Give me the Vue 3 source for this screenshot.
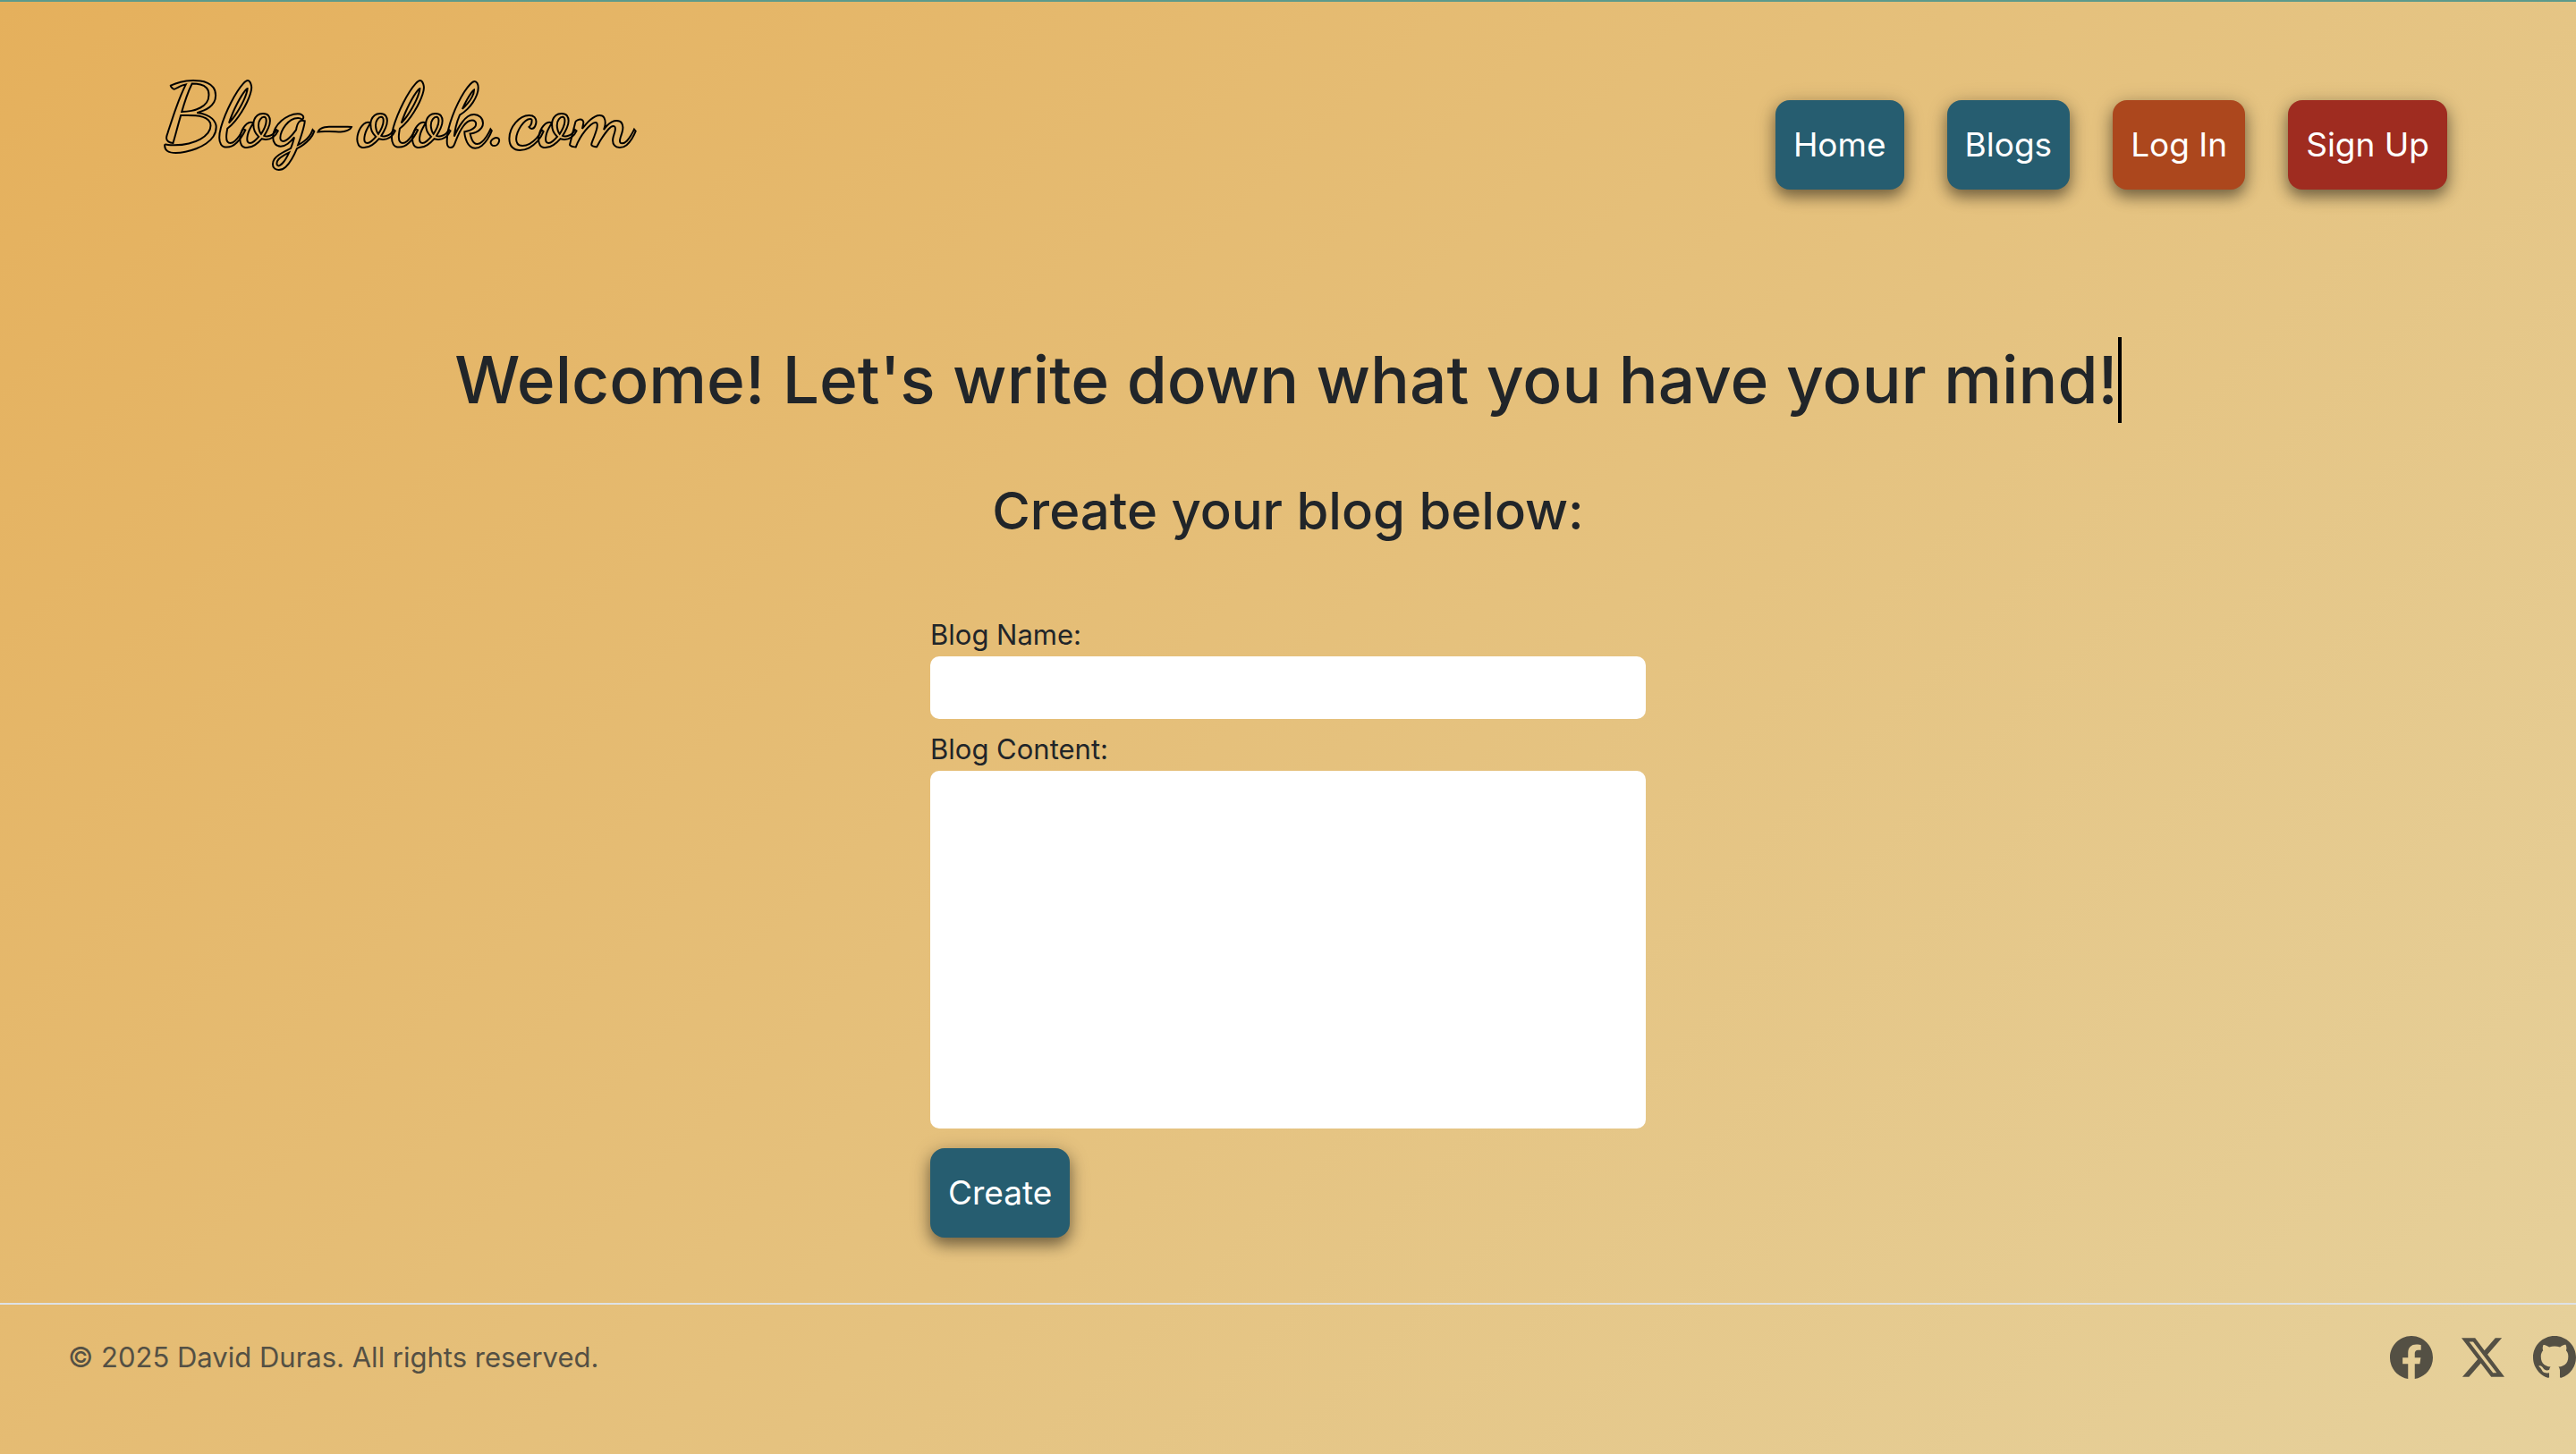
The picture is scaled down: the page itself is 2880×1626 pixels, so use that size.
<script setup>
import { ref } from 'vue'

const links = [
  { label: 'Home', tone: 'teal' },
  { label: 'Blogs', tone: 'teal' },
  { label: 'Log In', tone: 'rust' },
  { label: 'Sign Up', tone: 'red' },
]

const socials = [
  {
    name: 'Facebook',
    path: 'M16 8.049c0-4.446-3.582-8.05-8-8.05C3.58 0-.002 3.603-.002 8.05c0 4.017 2.926 7.347 6.75 7.951v-5.625h-2.03V8.05H6.75V6.275c0-2.017 1.195-3.131 3.022-3.131.876 0 1.791.157 1.791.157v1.98h-1.009c-.993 0-1.303.621-1.303 1.258v1.51h2.218l-.354 2.326H9.25V16c3.824-.604 6.75-3.934 6.75-7.951',
  },
  {
    name: 'X',
    path: 'M12.6.75h2.454l-5.36 6.142L16 15.25h-4.937l-3.867-5.07-4.425 5.07H.316l5.733-6.57L0 .75h5.063l3.495 4.633L12.601.75Zm-.86 13.028h1.36L4.323 2.145H2.865z',
  },
  {
    name: 'GitHub',
    path: 'M8 0C3.58 0 0 3.58 0 8c0 3.54 2.29 6.53 5.47 7.59.4.07.55-.17.55-.38 0-.19-.01-.82-.01-1.49-2.01.37-2.53-.49-2.69-.94-.09-.23-.48-.94-.82-1.13-.28-.15-.68-.52-.01-.53.63-.01 1.08.58 1.23.82.72 1.21 1.87.87 2.33.66.07-.52.28-.87.51-1.07-1.78-.2-3.64-.89-3.64-3.95 0-.87.31-1.59.82-2.15-.08-.2-.36-1.02.08-2.12 0 0 .67-.21 2.2.82.64-.18 1.32-.27 2-.27s1.36.09 2 .27c1.53-1.04 2.2-.82 2.2-.82.44 1.1.16 1.92.08 2.12.51.56.82 1.27.82 2.15 0 3.07-1.87 3.75-3.65 3.95.29.25.54.73.54 1.48 0 1.07-.01 1.93-.01 2.2 0 .21.15.46.55.38A8.01 8.01 0 0 0 16 8c0-4.42-3.58-8-8-8',
  },
]

const name = ref('')
const content = ref('')
</script>

<template>
  <div class="page">
    <header class="header">
      <a class="logo" href="#">Blog-olok.com</a>
      <nav class="nav">
        <a v-for="link in links" :key="link.label" class="btn" :class="link.tone" href="#">{{ link.label }}</a>
      </nav>
    </header>

    <main class="main">
      <h1 class="title">Welcome! Let's write down what you have your mind!</h1>
      <h2 class="subtitle">Create your blog below:</h2>
      <form class="form" @submit.prevent>
        <label for="blog-name">Blog Name:</label>
        <input id="blog-name" v-model="name" class="field" type="text" />
        <label for="blog-content">Blog Content:</label>
        <textarea id="blog-content" v-model="content" class="field area"></textarea>
        <button class="btn teal" type="submit">Create</button>
      </form>
    </main>

    <footer class="footer">
      <p class="copyright">© 2025 David Duras. All rights reserved.</p>
      <ul class="socials">
        <li v-for="item in socials" :key="item.name">
          <a href="#" :aria-label="item.name">
            <svg viewBox="0 0 16 16" width="48" height="48" fill="currentColor" aria-hidden="true">
              <path :d="item.path" />
            </svg>
          </a>
        </li>
      </ul>
    </footer>
  </div>
</template>

<style>
body {
  margin: 0;
}
</style>

<style scoped>
.page {
  box-sizing: border-box;
  display: flex;
  flex-direction: column;
  min-height: 100vh;
  overflow-x: hidden;
  border-top: 2px solid #5c9a8b;
  background: linear-gradient(135deg, #e5b05c, #e5c27f 55%, #e6d19c);
  color: #212529;
  font-family: Inter, "Liberation Sans", sans-serif;
  font-size: 31px;
  line-height: 48px;
}

.header {
  display: flex;
  justify-content: space-between;
  align-items: flex-start;
  padding: 62px 5% 0 180px;
}

.logo {
  color: transparent;
  font-family: "Dancing Script", "Liberation Serif", cursive;
  font-size: 100px;
  font-weight: 700;
  line-height: 132px;
  text-decoration: none;
  -webkit-text-stroke: 2px #000;
}

.nav {
  display: flex;
  gap: 48px;
  padding-top: 48px;
}

.btn {
  box-sizing: border-box;
  padding: 20px;
  border: 0;
  border-radius: 16px;
  box-shadow: 0 8px 16px rgba(0, 0, 0, 0.4), 0 4px 24px rgba(0, 0, 0, 0.2);
  color: #fff;
  font-family: inherit;
  font-size: 37px;
  line-height: 60px;
  text-decoration: none;
  white-space: nowrap;
}

.teal {
  background: #265d70;
}

.rust {
  background: #ac471d;
}

.red {
  background: #9f2c20;
}

.main {
  display: flex;
  flex-direction: column;
  align-items: center;
  padding-top: 165px;
}

.title {
  margin: 0;
  border-right: 4px solid #000;
  font-size: 73px;
  font-weight: 500;
  line-height: 96px;
  white-space: nowrap;
}

.subtitle {
  margin: 60px 0 76px;
  font-size: 58px;
  font-weight: 500;
  line-height: 77px;
}

.form {
  display: flex;
  flex-direction: column;
  align-items: flex-start;
  width: 800px;
}

.field {
  box-sizing: border-box;
  width: 100%;
  height: 70px;
  margin: 0 0 10px;
  padding: 10px;
  border: 0;
  border-radius: 10px;
  background: #fff;
  font: inherit;
}

.area {
  height: 400px;
  margin-bottom: 22px;
  resize: none;
}

.footer {
  display: flex;
  justify-content: space-between;
  align-items: center;
  margin-top: 73px;
  padding: 35px 0 35px 76px;
  border-top: 2px solid #dee2e6;
  color: #545044;
}

.copyright {
  margin: 0;
}

.socials {
  display: flex;
  gap: 32px;
  margin: 0;
  padding: 0;
  list-style: none;
}

.socials a,
.socials svg {
  display: block;
  color: inherit;
}
</style>
